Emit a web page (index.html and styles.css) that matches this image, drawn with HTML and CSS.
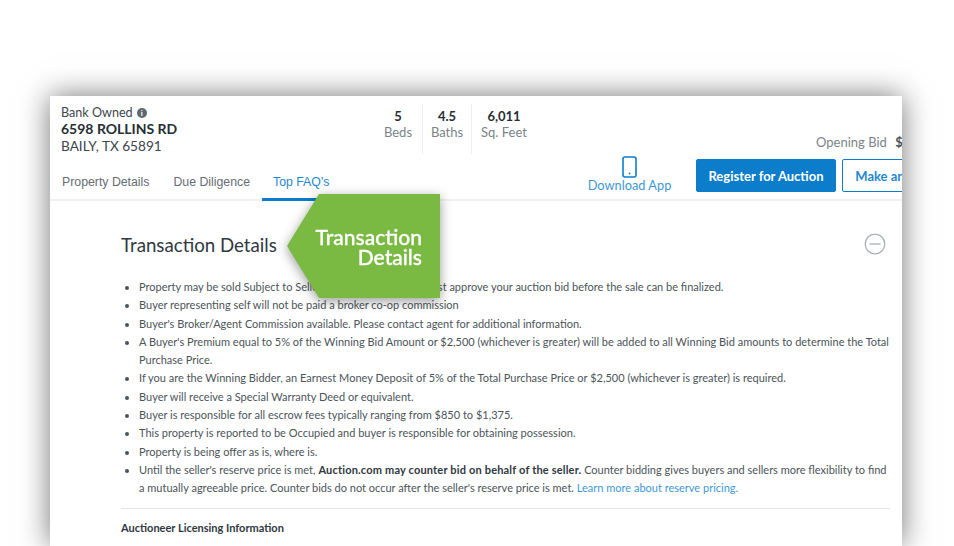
FILE: index.html
```html
<!DOCTYPE html>
<html lang="en">
<head>
    <meta charset="UTF-8">
    <title>Transaction Details</title>
    <link rel="stylesheet" href="styles.css">
</head>
<body>
    <div class="card">
        <header class="top">
            <div class="address">
                <div class="owned">Bank Owned <span class="info">i</span></div>
                <div class="street">6598 ROLLINS RD</div>
                <div class="city">BAILY, TX 65891</div>
            </div>
            <div class="stats">
                <div class="stat"><b>5</b><span>Beds</span></div>
                <div class="stat"><b>4.5</b><span>Baths</span></div>
                <div class="stat"><b>6,011</b><span>Sq. Feet</span></div>
            </div>
            <div class="bid">Opening Bid <b>$150,000</b></div>
        </header>
        <nav class="tabs">
            <a href="#">Property Details</a>
            <a href="#">Due Diligence</a>
            <a href="#" class="active">Top FAQ's</a>
            <div class="actions">
                <a href="#" class="app">
                    <svg width="15" height="22" viewBox="0 0 15 22">
                        <rect x="1" y="1" width="13" height="20" rx="2" fill="none" stroke="#0b7dcb" stroke-width="1.6"/>
                        <circle cx="7.5" cy="17.5" r="0.9" fill="#0b7dcb"/>
                    </svg>
                    <span>Download App</span>
                </a>
                <a href="#" class="btn primary">Register for Auction</a>
                <a href="#" class="btn outline">Make an Offer</a>
            </div>
        </nav>
        <section class="content">
            <div class="title-row">
                <h2>Transaction Details</h2>
                <svg class="collapse" width="22" height="22" viewBox="0 0 22 22">
                    <circle cx="11" cy="11" r="9.8" fill="none" stroke="#a9afb3" stroke-width="1.3"/>
                    <line x1="5.5" y1="11" x2="16.5" y2="11" stroke="#a9afb3" stroke-width="1.3"/>
                </svg>
            </div>
            <ul>
                <li>Property may be sold Subject to Seller Confirmation. Seller must approve your auction bid before the sale can be finalized.</li>
                <li>Buyer representing self will not be paid a broker co-op commission</li>
                <li>Buyer's Broker/Agent Commission available. Please contact agent for additional information.</li>
                <li>A Buyer's Premium equal to 5% of the Winning Bid Amount or $2,500 (whichever is greater) will be added to all Winning Bid amounts to determine the Total Purchase Price.</li>
                <li>If you are the Winning Bidder, an Earnest Money Deposit of 5% of the Total Purchase Price or $2,500 (whichever is greater) is required.</li>
                <li>Buyer will receive a Special Warranty Deed or equivalent.</li>
                <li>Buyer is responsible for all escrow fees typically ranging from $850 to $1,375.</li>
                <li>This property is reported to be Occupied and buyer is responsible for obtaining possession.</li>
                <li>Property is being offer as is, where is.</li>
                <li>Until the seller's reserve price is met, <b>Auction.com may counter bid on behalf of the seller.</b> Counter bidding gives buyers and sellers more flexibility to find a mutually agreeable price. Counter bids do not occur after the seller's reserve price is met. <a href="#">Learn more about reserve pricing.</a></li>
            </ul>
            <h3>Auctioneer Licensing Information</h3>
        </section>
    </div>
    <div class="callout">
        <div class="callout-shape">Transaction<br>Details</div>
    </div>
</body>
</html>
```

FILE: styles.css
```css
html, body {
    height: 100%;
    overflow: hidden;
}
body {
    margin: 0;
    padding: 96px 52px 0 50px;
    box-sizing: border-box;
    background: #fff;
    font-family: Lato, "Open Sans", sans-serif;
    color: #3c464d;
}
a {
    text-decoration: none;
}
.card {
    height: 450px;
    background: #fff;
    overflow: hidden;
    box-shadow: 0 0 28px rgba(0, 0, 0, 0.55);
}
.top {
    display: flex;
    box-sizing: border-box;
    height: 67px;
    padding: 8px 0 0 11px;
}
.address {
    width: 312px;
    font-size: 12.6px;
    line-height: 16.5px;
    color: #3c464d;
}
.owned {
    display: flex;
    align-items: center;
    gap: 4px;
    margin-top: 1px;
}
.info {
    width: 10px;
    height: 10px;
    border-radius: 50%;
    background: #5f686e;
    color: #fff;
    font-size: 8px;
    font-weight: 700;
    line-height: 10px;
    text-align: center;
}
.street {
    margin-top: -1px;
    font-size: 14px;
    font-weight: 700;
    color: #262e33;
}
.city {
    font-size: 13.6px;
    margin-top: 0.5px;
}
.stats {
    display: flex;
    height: 50px;
    margin-left: 1px;
}
.stat {
    display: flex;
    flex-direction: column;
    align-items: center;
    box-sizing: border-box;
    width: 49px;
    padding-top: 4px;
    border-right: 1px solid #eceeef;
    font-size: 13px;
    line-height: 16px;
}
.stat:last-child {
    width: 64px;
    border-right: none;
}
.stat b {
    color: #262e33;
}
.stat span {
    color: #7b8489;
}
.bid {
    margin-left: auto;
    padding-top: 30px;
    white-space: nowrap;
    width: 86px;
    font-size: 13px;
    color: #7b8489;
}
.bid b {
    margin-left: 5px;
    color: #4b5459;
}
.tabs {
    display: flex;
    align-items: flex-end;
    height: 36px;
    border-bottom: 2px solid #f0f1f2;
}
.tabs > a {
    height: 26px;
    margin-bottom: -2px;
    padding: 0 12px;
    font-family: "Liberation Sans", sans-serif;
    font-size: 12.3px;
    line-height: 20px;
    color: #666e73;
    border-bottom: 3px solid transparent;
}
.tabs > a.active {
    padding: 0 11px;
    color: #1e88d2;
    border-bottom-color: #0b7dcb;
}
.actions {
    display: flex;
    align-items: flex-end;
    margin-left: auto;
    padding-bottom: 7px;
    width: 314px;
    flex-shrink: 0;
}
.app {
    display: flex;
    flex-direction: column;
    align-items: center;
    flex-shrink: 0;
    width: 83px;
    margin: 0 25px -1px 0;
    font-size: 12.8px;
    line-height: 15px;
    white-space: nowrap;
    color: #3e98d8;
}
.btn {
    flex-shrink: 0;
    box-sizing: border-box;
    height: 33px;
    margin-right: 6px;
    border-radius: 2px;
    font-size: 13px;
    font-weight: 700;
    line-height: 32px;
    text-align: center;
    white-space: nowrap;
}
.primary {
    width: 140px;
    background: #0b7dcb;
    border: 1px solid #0b7dcb;
    color: #fff;
}
.outline {
    width: 130px;
    padding-right: 20px;
    border: 1px solid #0b7dcb;
    color: #1e88d2;
}
.content {
    padding: 0 12px 0 71px;
}
.title-row {
    display: flex;
    justify-content: space-between;
    align-items: center;
    box-sizing: border-box;
    height: 77px;
    padding: 11px 4px 0 0;
}
.collapse {
    margin-bottom: 2px;
}
h2 {
    margin: 0;
    font-size: 18.7px;
    font-weight: 400;
    color: #2f383e;
}
ul {
    margin: 0;
    padding: 0 0 10px 18px;
    font-size: 11px;
    line-height: 18.3px;
    color: #4b5459;
    border-bottom: 1px solid #e3e5e6;
}
li b {
    letter-spacing: 0.18px;
    color: #2f383e;
}
li a {
    color: #3e98d8;
}
h3 {
    margin: 12px 0 0;
    font-size: 11px;
    font-weight: 700;
    color: #2f383e;
}
.callout {
    position: absolute;
    left: 287px;
    top: 194px;
    filter: drop-shadow(0 3px 6px rgba(0, 0, 0, 0.4));
}
.callout-shape {
    box-sizing: border-box;
    width: 153px;
    height: 104px;
    padding: 33px 18px 0 0;
    background: #7aba42;
    clip-path: polygon(0 50%, 32px 0, 100% 0, 100% 100%, 32px 100%);
    color: #fff;
    font-size: 21px;
    font-weight: 500;
    -webkit-text-stroke: 0.3px #fff;
    line-height: 20px;
    text-align: right;
}
```
